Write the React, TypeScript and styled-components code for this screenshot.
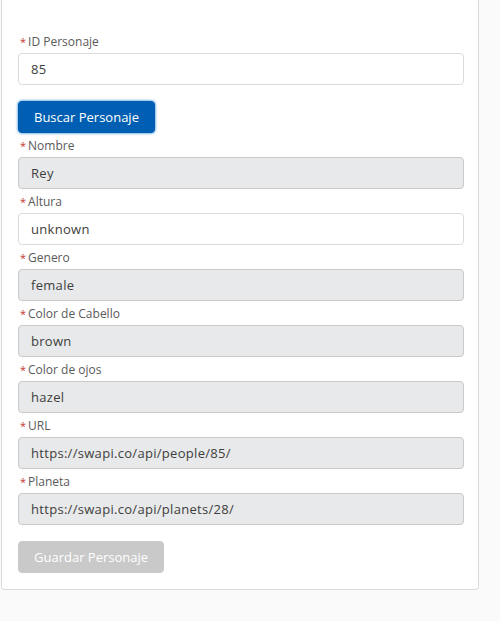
import React from 'react';
import styled, { createGlobalStyle } from 'styled-components';

const GlobalStyle = createGlobalStyle`
html, body {
  margin: 0;
  padding: 0;
  background: #fafafa;
  font-family: "Open Sans", "Noto Sans", sans-serif;
}
`;

const Card = styled.div`
width: 478px;
margin-left: 1px;
background: #fff;
border: 1px solid #dddbda;
border-top: none;
border-radius: 0 0 4px 4px;
padding: 33px 16px 16px 16px;
box-sizing: border-box;`;

const Group = styled.div`
margin-bottom: 4px;`;

const Label = styled.label`
display: block;
font-size: 12px;
line-height: 18px;
color: #5a5a5a;
margin-bottom: 2px;
padding-left: 2px;`;

const Req = styled.abbr`
color: #c23934;
font-size: 11px;
text-decoration: none;
margin-right: 2px;`;

const Input = styled.input<{ $readOnly?: boolean }>`
display: block;
width: 446px;
height: 32px;
box-sizing: border-box;
padding: 0 16px 0 12px;
font-family: inherit;
font-size: 13px;
letter-spacing: 0.3px;
color: #3e3e3c;
background: ${(p) => (p.$readOnly ? '#e8e9eb' : '#fff')};
border: 1px solid ${(p) => (p.$readOnly ? '#c9c9c9' : '#dddbda')};
border-radius: 4px;
outline: none;`;

const Button = styled.button<{ $disabled?: boolean }>`
display: inline-block;
height: 32px;
padding: 0 15px;
font-family: inherit;
font-size: 13px;
border-radius: 4px;
cursor: pointer;
color: #fff;
background: ${(p) => (p.$disabled ? '#c9c9c9' : '#005fb2')};
border: 1px solid ${(p) => (p.$disabled ? '#c9c9c9' : '#005fb2')};
box-shadow: ${(p) => (p.$disabled ? 'none' : '0 0 3px #0070d2')};`;

const ButtonRow = styled.div<{ $top: number }>`
margin-top: ${(p) => p.$top}px;`;

const fields = [
  { label: 'Nombre', value: 'Rey', ro: true },
  { label: 'Altura', value: 'unknown', ro: false },
  { label: 'Genero', value: 'female', ro: true },
  { label: 'Color de Cabello', value: 'brown', ro: true },
  { label: 'Color de ojos', value: 'hazel', ro: true },
  { label: 'URL', value: 'https://swapi.co/api/people/85/', ro: true },
  { label: 'Planeta', value: 'https://swapi.co/api/planets/28/', ro: true },
];

const Field = ({ label, value, ro }: { label: string, value: string, ro?: boolean }) => (
  <Group>
    <Label>
      <Req title="required">*</Req>
      {label}
    </Label>
    <Input $readOnly={ro} readOnly defaultValue={value} />
  </Group>
);

const App = () => (
  <>
    <GlobalStyle />
    <Card>
      <Label>
        <Req title="required">*</Req>
        ID Personaje
      </Label>
      <Input defaultValue="85" />
      <ButtonRow $top={16}>
        <Button>Buscar Personaje</Button>
      </ButtonRow>
      <div style={{ height: 4 }} />
      {fields.map((f) => (
        <Field key={f.label} label={f.label} value={f.value} ro={f.ro} />
      ))}
      <ButtonRow $top={16}>
        <Button $disabled>Guardar Personaje</Button>
      </ButtonRow>
    </Card>
  </>
);

export default App;
